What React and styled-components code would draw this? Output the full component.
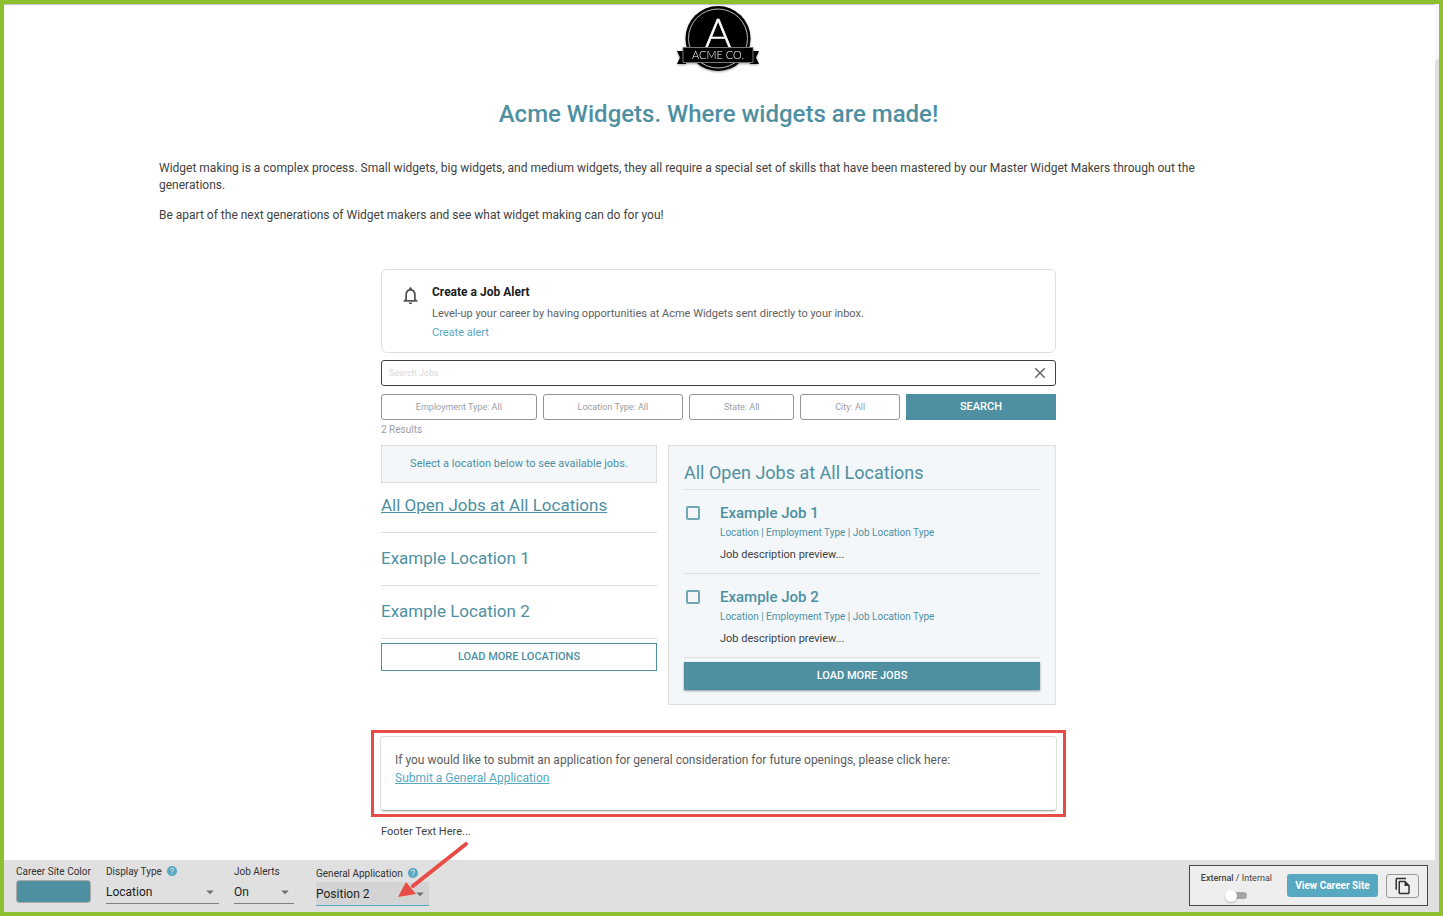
import { useState } from "react"
import styled, { ThemeProvider, createGlobalStyle } from "styled-components"
import {
  MdArrowDropDown,
  MdClose,
  MdHelp,
  MdNotificationsNone,
  MdOutlineFileCopy,
} from "react-icons/md"

const theme = {
  colors: {
    frame: "#8dc02f",
    primary: "#4e90a2",
    accent: "#57a8c1",
    text: "#424242",
    muted: "#9a9ea6",
    line: "#dfdfdf",
    panel: "#f3f7fa",
    toolbar: "#e0e0e0",
    highlight: "#e94b46",
  },
}

const filters = ["Employment Type: All", "Location Type: All", "State: All", "City: All"]
const locations = ["All Open Jobs at All Locations", "Example Location 1", "Example Location 2"]
const jobs = ["Example Job 1", "Example Job 2"]

const GlobalStyle = createGlobalStyle`
  * {
    box-sizing: border-box;
  }
  body {
    margin: 0;
    background: #fff;
    color: #424242;
    font-family: Roboto, "Liberation Sans", sans-serif;
    font-size: 12px;
  }
  h1, h2, h3, p, ul {
    margin: 0;
    padding: 0;
  }
  button, input, select {
    font-family: inherit;
    margin: 0;
  }
  button, select {
    cursor: pointer;
  }
`

const Page = styled.div`
  display: flex;
  flex-direction: column;
  min-height: 100vh;
  border: 4px solid ${({ theme }) => theme.colors.frame};
`
const Body = styled.div`
  flex: 1;
  display: flex;
  box-shadow: inset 0 2px 1px -1px #c4bfc6;
`
const Main = styled.main`
  flex: 1;
  display: flex;
  flex-direction: column;
  align-items: center;
  padding: 0 2px 20px 0;
`
const Rail = styled.div`
  width: 4px;
  padding-top: 55px;
  background-color: #f5f7fa;
`
const RailThumb = styled.div`
  height: 100%;
  border-top-left-radius: 4px;
  background-color: ${({ theme }) => theme.colors.line};
`

const Logo = styled.svg`
  display: block;
  filter: drop-shadow(0 1px 1px rgba(0, 0, 0, 0.35));

  text {
    fill: #fff;
    font-family: Lato, sans-serif;
    font-weight: 300;
    text-anchor: middle;
  }
`
const Title = styled.h1`
  margin-top: 24px;
  color: ${({ theme }) => theme.colors.primary};
  font-size: 24px;
  font-weight: 500;
  line-height: 32px;
`
const Intro = styled.div`
  align-self: stretch;
  padding: 0 180px 0 155px;
  margin: 30px 0 45px;
  line-height: 17px;

  p + p {
    margin-top: 13px;
  }
`
const Column = styled.div`
  width: 100%;
  max-width: 675px;
`

const AlertCard = styled.section`
  display: flex;
  gap: 11px;
  height: 84px;
  padding: 14px 18px;
  border: 1px solid ${({ theme }) => theme.colors.line};
  border-radius: 6px;

  svg {
    margin-top: 1px;
    color: #555;
  }
`
const AlertTitle = styled.h2`
  color: #1c1c1c;
  font-size: 12px;
  font-weight: 700;
  line-height: 16px;
`
const AlertText = styled.p`
  margin-top: 4px;
  color: #616161;
  font-size: 11px;
  line-height: 19px;
`
const AlertLink = styled.a`
  color: ${({ theme }) => theme.colors.accent};
  text-decoration: none;
`

const SearchBox = styled.div`
  display: flex;
  align-items: center;
  height: 26px;
  margin: 7px 0 8px;
  padding: 0 6px 0 7px;
  border: 1px solid #424242;
  border-radius: 3px;

  input {
    flex: 1;
    min-width: 0;
    padding: 0;
    border: 0;
    outline: 0;
    background: transparent;
    color: ${({ theme }) => theme.colors.text};
    font-size: 9px;
  }
  input::placeholder {
    color: #d8d8d8;
  }
  button {
    display: flex;
    padding: 0;
    border: 0;
    background: transparent;
    color: #666;
  }
`
const FilterRow = styled.div`
  display: flex;
  gap: 6px;
`
const FilterButton = styled.button`
  flex: 1 1 auto;
  height: 26px;
  padding: 0;
  border: 1px solid #949494;
  border-radius: 3px;
  background-color: #fff;
  color: ${({ theme }) => theme.colors.muted};
  font-size: 9px;
`
const SearchButton = styled.button`
  flex: 0 0 150px;
  height: 26px;
  padding: 0 0 2px;
  border: 0;
  background-color: ${({ theme }) => theme.colors.primary};
  color: #fff;
  font-size: 11px;
  font-weight: 500;
`
const Results = styled.p`
  padding: 3px 0 8px;
  color: ${({ theme }) => theme.colors.muted};
  font-size: 10px;
  line-height: 14px;
`

const Panels = styled.div`
  display: grid;
  grid-template-columns: 276fr 388fr;
  align-items: start;
  gap: 11px;
`
const Hint = styled.p`
  border: 1px solid ${({ theme }) => theme.colors.line};
  background-color: ${({ theme }) => theme.colors.panel};
  color: ${({ theme }) => theme.colors.primary};
  font-size: 11px;
  line-height: 36px;
  text-align: center;
`
const LocationList = styled.ul`
  list-style: none;

  li {
    padding: 14px 0 16px;
    border-bottom: 1px solid ${({ theme }) => theme.colors.line};
  }
  li:first-child {
    padding-top: 11px;
  }
`
const LocationLink = styled.a`
  display: block;
  color: ${({ theme }) => theme.colors.primary};
  font-size: 17px;
  line-height: 22px;
  text-decoration: ${({ $active }) => ($active ? "underline" : "none")};
`
const LoadButton = styled.button`
  display: block;
  width: 100%;
  height: 28px;
  margin-top: 4px;
  padding: 0 0 2px;
  border: 1px solid ${({ theme }) => theme.colors.primary};
  background-color: ${({ theme, $solid }) => ($solid ? theme.colors.primary : "#fff")};
  box-shadow: ${({ $solid }) => ($solid ? "0 1px 2px rgba(0, 0, 0, 0.4)" : "none")};
  color: ${({ theme, $solid }) => ($solid ? "#fff" : theme.colors.primary)};
  font-size: 11px;
  font-weight: 500;
`
const JobsPanel = styled.section`
  padding: 15px 15px 14px;
  border: 1px solid ${({ theme }) => theme.colors.line};
  background-color: ${({ theme }) => theme.colors.panel};
`
const JobsTitle = styled.h2`
  padding-bottom: 5px;
  border-bottom: 1px solid ${({ theme }) => theme.colors.line};
  color: ${({ theme }) => theme.colors.primary};
  font-size: 18px;
  font-weight: 400;
  line-height: 23px;
`
const Job = styled.article`
  display: flex;
  align-items: flex-start;
  gap: 20px;
  height: 84px;
  padding: 13px 0 0 2px;
  border-bottom: 1px solid ${({ theme }) => theme.colors.line};
`
const JobCheck = styled.input`
  appearance: none;
  width: 14px;
  height: 14px;
  margin: 3px 0 0;
  border: 2px solid #71a6b4;
  border-radius: 2px;

  &:checked {
    background-color: ${({ theme }) => theme.colors.primary};
  }
`
const JobName = styled.label`
  display: block;
  color: ${({ theme }) => theme.colors.primary};
  font-size: 15px;
  font-weight: 500;
  line-height: 20px;
`
const JobMeta = styled.p`
  color: ${({ theme }) => theme.colors.primary};
  font-size: 10px;
  line-height: 20px;
`
const JobText = styled.p`
  font-size: 11px;
  line-height: 24px;
`

const Highlight = styled.div`
  width: 100%;
  max-width: 695px;
  margin: 25px 0 7px;
  padding: 3px 6px;
  border: 3px solid ${({ theme }) => theme.colors.highlight};
`
const GeneralCard = styled.section`
  height: 75px;
  padding: 14px;
  border: 1px solid ${({ theme }) => theme.colors.line};
  border-bottom-color: #b0b0b0;
  border-radius: 4px;
  box-shadow: 0 1px 1px rgba(0, 0, 0, 0.15);
  color: #5c5c5c;
  line-height: 18px;

  a {
    color: ${({ theme }) => theme.colors.accent};
  }
`
const FooterText = styled.p`
  font-size: 11px;
  line-height: 16px;
`

const Toolbar = styled.footer`
  display: flex;
  justify-content: space-between;
  height: 52px;
  padding: 5px 11px 0 12px;
  background-color: ${({ theme }) => theme.colors.toolbar};
`
const Fields = styled.div`
  display: flex;
  align-items: flex-start;
`
const Field = styled.div`
  position: relative;
  width: ${({ $width }) => $width}px;
  margin-right: ${({ $gap }) => $gap}px;
  padding-top: ${({ $lowered }) => ($lowered ? 2 : 0)}px;
`
const FieldLabel = styled.div`
  display: flex;
  gap: 4px;
  height: 14px;
  color: #333;
  font-size: 10px;
  line-height: 14px;
  white-space: nowrap;

  svg {
    color: ${({ theme }) => theme.colors.accent};
    flex: none;
  }
`
const Swatch = styled.input`
  appearance: none;
  display: block;
  width: 100%;
  height: 23px;
  margin-top: 1px;
  padding: 0;
  border: 1px solid #a9a9a9;
  border-radius: 3px;
  overflow: hidden;
  background: none;

  &::-webkit-color-swatch-wrapper {
    padding: 0;
  }
  &::-webkit-color-swatch {
    border: 0;
  }
`
const SelectWrap = styled.div`
  position: relative;
  margin-top: 1px;

  select {
    appearance: none;
    display: block;
    width: 100%;
    height: 24px;
    padding: 0 20px 0 0;
    border: 0;
    border-bottom: 1px solid ${({ theme, $focused }) => ($focused ? theme.colors.accent : "#808080")};
    border-radius: 0;
    outline: 0;
    background-color: ${({ $focused }) => ($focused ? "#d4d4d4" : "transparent")};
    color: #212121;
    font-size: 12px;
  }
  svg {
    position: absolute;
    top: 3px;
    right: 0;
    color: #6f6f6f;
    pointer-events: none;
  }
`
const Arrow = styled.svg`
  position: absolute;
  left: 80px;
  top: -25px;
  pointer-events: none;
`

const SiteBox = styled.div`
  display: flex;
  height: 41px;
  padding: 8px 8px 0 11px;
  border: 1px solid #484848;
  background-color: #eee;
`
const Toggle = styled.label`
  display: flex;
  flex-direction: column;
  align-items: center;
  color: #444;
  font-size: 9px;
  line-height: 8px;
  margin-right: 15px;

  b {
    font-weight: 500;
  }
  input {
    appearance: none;
    width: 21px;
    height: 7px;
    margin: 10px 0 0;
    border-radius: 4px;
    background-color: #a5a5a5;
  }
  input::before {
    content: "";
    display: block;
    width: 12px;
    height: 12px;
    margin: -2px 0 0 -1px;
    border-radius: 50%;
    background-color: #fff;
    box-shadow: 0 1px 2px rgba(0, 0, 0, 0.25);
  }
  input:checked::before {
    margin-left: 10px;
  }
`
const ViewButton = styled.button`
  width: 91px;
  height: 23px;
  padding: 0;
  border: 0;
  border-radius: 3px;
  background-color: ${({ theme }) => theme.colors.accent};
  color: #fff;
  font-size: 10px;
  font-weight: 700;
`
const CopyButton = styled.button`
  display: flex;
  align-items: center;
  justify-content: center;
  width: 33px;
  height: 24px;
  margin-left: 8px;
  padding: 0;
  border: 1px solid #979797;
  border-radius: 3px;
  background: transparent;
  color: #333;
`

const AcmeLogo = () => (
  <Logo width="84" height="70" viewBox="1 0 84 70" role="img" aria-label="Acme Co.">
    <path d="M1 47h9v13H1l3-6.500zM83 47h-9v13h9l-3-6.500z" fill="#000" />
    <circle cx="42" cy="34.500" r="32.500" fill="#000" />
    <circle cx="42" cy="34.500" r="29.500" fill="none" stroke="#bbb" strokeWidth="1" />
    <text x="42" y="43" fontSize="40" stroke="#fff" strokeWidth="0.500">
      A
    </text>
    <path d="M7 43.500h70v15H7z" fill="#000" stroke="#777" strokeWidth="1" />
    <text x="42" y="55" fontSize="11">
      ACME CO.
    </text>
  </Logo>
)

const SelectField = ({ id, label, options, width, gap, help, focused }) => (
  <Field $width={width} $gap={gap} $lowered={focused}>
    <FieldLabel>
      <label htmlFor={id}>{label}</label>
      {help && <MdHelp size={12} />}
    </FieldLabel>
    <SelectWrap $focused={focused}>
      <select id={id}>
        {options.map((option) => (
          <option key={option}>{option}</option>
        ))}
      </select>
      <MdArrowDropDown size={18} />
    </SelectWrap>
    {focused && (
      <Arrow width="76" height="58" viewBox="0 0 76 58">
        <path d="M70 4L17 46" stroke="#e94b46" strokeWidth="4" strokeLinecap="round" />
        <path d="M2 57L10 42L20 54z" fill="#e94b46" />
      </Arrow>
    )}
  </Field>
)

const App = () => {
  const [query, setQuery] = useState("")
  const [activeLocation, setActiveLocation] = useState(0)
  const [color, setColor] = useState(theme.colors.primary)

  return (
    <ThemeProvider theme={theme}>
      <GlobalStyle />
      <Page>
        <Body>
          <Main>
            <AcmeLogo />
            <Title>Acme Widgets. Where widgets are made!</Title>
            <Intro>
              <p>
                Widget making is a complex process. Small widgets, big widgets, and medium widgets,
                they all require a special set of skills that have been mastered by our Master
                Widget Makers through out the generations.
              </p>
              <p>
                Be apart of the next generations of Widget makers and see what widget making can do
                for you!
              </p>
            </Intro>
            <Column>
              <AlertCard>
                <MdNotificationsNone size={21} />
                <div>
                  <AlertTitle>Create a Job Alert</AlertTitle>
                  <AlertText>
                    Level-up your career by having opportunities at Acme Widgets sent directly to
                    your inbox.
                    <br />
                    <AlertLink href="#alert">Create alert</AlertLink>
                  </AlertText>
                </div>
              </AlertCard>
              <SearchBox>
                <input
                  aria-label="Search Jobs"
                  placeholder="Search Jobs"
                  value={query}
                  onChange={(e) => setQuery(e.target.value)}
                />
                <button aria-label="Clear search" onClick={() => setQuery("")}>
                  <MdClose size={18} />
                </button>
              </SearchBox>
              <FilterRow>
                {filters.map((filter) => (
                  <FilterButton key={filter}>{filter}</FilterButton>
                ))}
                <SearchButton>SEARCH</SearchButton>
              </FilterRow>
              <Results>2 Results</Results>
              <Panels>
                <div>
                  <Hint>Select a location below to see available jobs.</Hint>
                  <LocationList>
                    {locations.map((location, i) => (
                      <li key={location}>
                        <LocationLink
                          href="#jobs"
                          $active={i === activeLocation}
                          onClick={() => setActiveLocation(i)}
                        >
                          {location}
                        </LocationLink>
                      </li>
                    ))}
                  </LocationList>
                  <LoadButton>LOAD MORE LOCATIONS</LoadButton>
                </div>
                <JobsPanel id="jobs">
                  <JobsTitle>{locations[activeLocation]}</JobsTitle>
                  {jobs.map((job, i) => (
                    <Job key={job}>
                      <JobCheck type="checkbox" id={`job-${i}`} />
                      <div>
                        <JobName htmlFor={`job-${i}`}>{job}</JobName>
                        <JobMeta>Location | Employment Type | Job Location Type</JobMeta>
                        <JobText>Job description preview...</JobText>
                      </div>
                    </Job>
                  ))}
                  <LoadButton $solid>LOAD MORE JOBS</LoadButton>
                </JobsPanel>
              </Panels>
            </Column>
            <Highlight>
              <GeneralCard>
                <p>
                  If you would like to submit an application for general consideration for future
                  openings, please click here:
                </p>
                <a href="#apply">Submit a General Application</a>
              </GeneralCard>
            </Highlight>
            <Column>
              <FooterText>Footer Text Here...</FooterText>
            </Column>
          </Main>
          <Rail>
            <RailThumb />
          </Rail>
        </Body>
        <Toolbar>
          <Fields>
            <Field $width={75} $gap={15}>
              <FieldLabel>
                <label htmlFor="color">Career Site Color</label>
              </FieldLabel>
              <Swatch
                type="color"
                id="color"
                value={color}
                onChange={(e) => setColor(e.target.value)}
              />
            </Field>
            <SelectField
              id="display"
              label="Display Type"
              options={["Location", "Department"]}
              width={113}
              gap={15}
              help
            />
            <SelectField id="alerts" label="Job Alerts" options={["On", "Off"]} width={60} gap={22} />
            <SelectField
              id="general"
              label="General Application"
              options={["Position 2", "Position 1"]}
              width={113}
              gap={0}
              help
              focused
            />
          </Fields>
          <SiteBox>
            <Toggle>
              <span>
                <b>External</b> / Internal
              </span>
              <input type="checkbox" role="switch" />
            </Toggle>
            <ViewButton>View Career Site</ViewButton>
            <CopyButton aria-label="Copy link">
              <MdOutlineFileCopy size={18} />
            </CopyButton>
          </SiteBox>
        </Toolbar>
      </Page>
    </ThemeProvider>
  )
}

export default App
